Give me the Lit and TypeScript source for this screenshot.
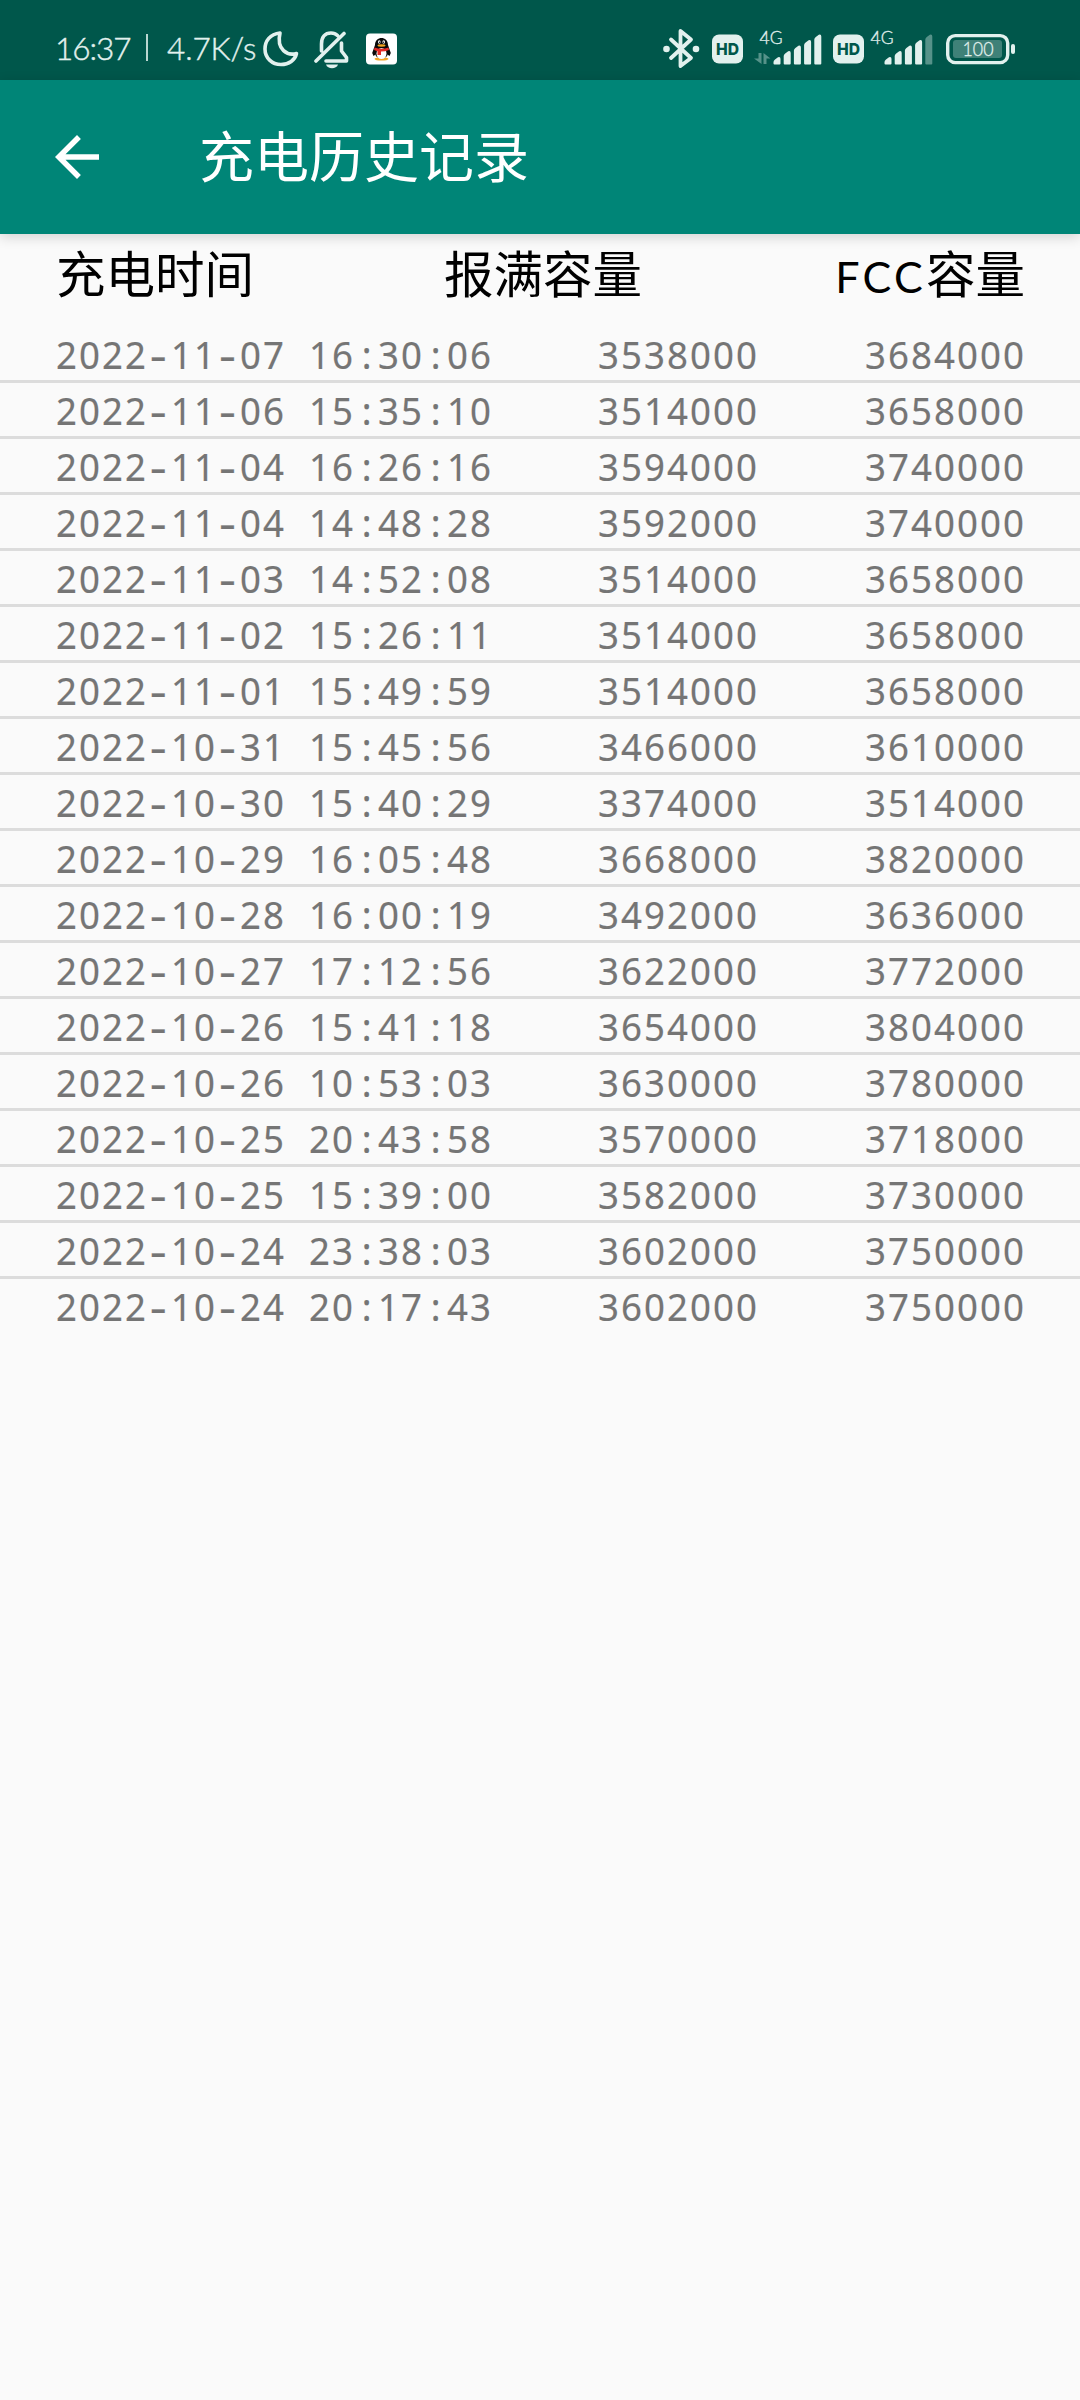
import { LitElement, html, svg, css } from "lit";
import { customElement, property } from "lit/decorators.js";

type Entry = [time: string, full: string, fcc: string];

const HISTORY: Entry[] = [
  ["2022-11-07 16:30:06", "3538000", "3684000"],
  ["2022-11-06 15:35:10", "3514000", "3658000"],
  ["2022-11-04 16:26:16", "3594000", "3740000"],
  ["2022-11-04 14:48:28", "3592000", "3740000"],
  ["2022-11-03 14:52:08", "3514000", "3658000"],
  ["2022-11-02 15:26:11", "3514000", "3658000"],
  ["2022-11-01 15:49:59", "3514000", "3658000"],
  ["2022-10-31 15:45:56", "3466000", "3610000"],
  ["2022-10-30 15:40:29", "3374000", "3514000"],
  ["2022-10-29 16:05:48", "3668000", "3820000"],
  ["2022-10-28 16:00:19", "3492000", "3636000"],
  ["2022-10-27 17:12:56", "3622000", "3772000"],
  ["2022-10-26 15:41:18", "3654000", "3804000"],
  ["2022-10-26 10:53:03", "3630000", "3780000"],
  ["2022-10-25 20:43:58", "3570000", "3718000"],
  ["2022-10-25 15:39:00", "3582000", "3730000"],
  ["2022-10-24 23:38:03", "3602000", "3750000"],
  ["2022-10-24 20:17:43", "3602000", "3750000"],
];

@customElement("status-bar")
class StatusBar extends LitElement {
  static styles = css`
    :host {
      display: flex;
      height: 80px;
      padding: 0 65px 0 55px;
      background: #00574b;
      color: #e2f1ee;
      font-family: Lato, "Liberation Sans", sans-serif;
      font-weight: 300;
      font-size: 31.5px;
      line-height: 96px;
      white-space: nowrap;
      -webkit-text-stroke: 0.4px #e2f1ee;
    }
    svg { display: block; flex: none; fill: #e2f1ee; -webkit-text-stroke: 0; }
    .clock { width: 91px; letter-spacing: -1px; }
    .divider { width: 2px; height: 27px; margin-top: 34px; background: #b9d6d0; }
    .speed { width: 98px; margin-left: 19px; letter-spacing: -0.1px; }
    .moon { margin-left: -2px; }
    .bell { margin-left: 15px; }
    .app { margin-left: 16px; }
    .bluetooth { margin-left: auto; }
    .hd { margin-left: 12px; }
    .signal { margin: 0 -1px 0 11px; }
    .signal2 { margin-left: 6px; }
    .battery { margin-left: 13px; }
    .line { fill: none; stroke: #e2f1ee; }
    .dim { opacity: 0.38; }
    .hd-label { font: 800 16.5px Inter, "Liberation Sans", sans-serif; fill: #00574b; }
    .net-label { font: 300 17px Lato, "Liberation Sans", sans-serif; stroke: #e2f1ee; stroke-width: 0.3px; }
    .level { font: 300 20.5px Lato, "Liberation Sans", sans-serif; stroke: #e2f1ee; stroke-width: 0.3px; }
  `;

  private hd() {
    return html`<svg class="hd" width="31" height="80" viewBox="0 0 31 80">
      <rect x="0" y="34.5" width="31" height="29" rx="7" />
      <text class="hd-label" x="15.5" y="55" text-anchor="middle" textLength="23" lengthAdjust="spacingAndGlyphs">HD</text>
    </svg>`;
  }

  private bars(x: number, lastDim: boolean) {
    const tops = [57, 51, 45.5, 40, 34.5];
    return tops.map((t, i) => {
      const l = x + i * 10.2;
      return svg`<path class=${lastDim && i === 4 ? "dim" : ""}
        d="M${l} ${t + 5}Q${l} ${t + 3.5} ${l + 1.5} ${t + 2.5}L${l + 4.5} ${t + 0.3}Q${l + 7} ${t - 0.5} ${l + 7} ${t + 2}V63.500Q${l + 7} 64.500 ${l + 6} 64.500H${l + 1}Q${l} 64.500 ${l} 63.500Z" />`;
    });
  }

  render() {
    return html`
      <span class="clock">16:37</span>
      <span class="divider"></span>
      <span class="speed">4.7K/s</span>
      <svg class="moon" width="36" height="80" viewBox="0 0 36 80">
        <path class="line" stroke-width="3.6" stroke-linejoin="round"
          d="M17 33C7 34 2 41 2 49C2 58 9 64.500 18 64.500C26 64.500 32 60 33.500 53.500C25 56 13 50 17 33Z" />
      </svg>
      <svg class="bell" width="36" height="80" viewBox="0 0 36 80">
        <g class="line" stroke-width="3.6" stroke-linecap="round" stroke-linejoin="round">
          <path d="M2 61L30 33.500M7.500 51V44C7.500 37 11 33 17 33C20 33 22 34 23.500 35.500M27.500 43V51L32.500 57.500V61H12" />
        </g>
        <path d="M12 64.500H24C22.500 69.500 13.500 69.500 12 64.500Z" />
      </svg>
      <svg class="app" width="31" height="80" viewBox="0 0 31 80">
        <rect x="0" y="33.500" width="31" height="31" rx="4" fill="#fff" />
        <ellipse cx="15.500" cy="59" rx="7" ry="1.600" fill="#f2a628" />
        <path d="M9 45C9 35.500 22 35.500 22 45L24.800 53L23.500 56L21.500 54.500C21 59.500 10 59.500 9.500 54.500L7.500 56L6.200 53Z" fill="#090909" />
        <ellipse cx="15.500" cy="53.500" rx="5" ry="5.500" fill="#fff" />
        <ellipse cx="13.300" cy="42" rx="1.300" ry="1.800" fill="#fff" />
        <ellipse cx="17.700" cy="42" rx="1.300" ry="1.800" fill="#fff" />
        <circle cx="13.600" cy="42.200" r=".7" fill="#111" /><circle cx="17.400" cy="42.200" r=".7" fill="#111" />
        <ellipse cx="15.500" cy="45.500" rx="4" ry="1.200" fill="#f4a51e" />
        <path d="M8.500 47.500Q15.500 50 22.500 47.500L23 50Q19 51.500 15 51.500V55H11.500V51.300L8 50Z" fill="#e42b27" />
      </svg>
      <svg class="bluetooth" width="37" height="80" viewBox="0 0 37 80">
        <path class="line" stroke-width="3.800" stroke-linejoin="round" stroke-linecap="round"
          d="M8 39.500L28 58L17.500 66V31L28 39.500L8 58" />
        <circle cx="3.500" cy="49" r="3.300" /><circle cx="33" cy="49" r="3.300" />
      </svg>
      ${this.hd()}
      <svg class="signal" width="68" height="80" viewBox="755 0 68 80">
        <text class="net-label" x="760.500" y="44" textLength="23" lengthAdjust="spacingAndGlyphs">4G</text>
        <path class="dim" d="M759.500 53H762.500V64L755 58.500H759.500ZM764.500 64V53L771.500 58.500H767.500V64Z" />
        ${this.bars(774.5, false)}
      </svg>
      ${this.hd()}
      <svg class="signal2" width="63" height="80" viewBox="870 0 63 80">
        <text class="net-label" x="870.500" y="44" textLength="23" lengthAdjust="spacingAndGlyphs">4G</text>
        ${this.bars(884.5, true)}
      </svg>
      <svg class="battery" width="69" height="80" viewBox="946 0 69 80">
        <rect class="line" x="947.700" y="35.600" width="60" height="27" rx="7.500" stroke-width="3.400" />
        <rect x="953" y="40" width="49" height="18" rx="3" opacity=".28" />
        <rect x="1011" y="44" width="4" height="10" rx="2" />
        <text class="level" x="978" y="56.300" text-anchor="middle" textLength="31" lengthAdjust="spacingAndGlyphs">100</text>
      </svg>
    `;
  }
}

@customElement("app-bar")
class AppBar extends LitElement {
  @property() heading = "";
  static styles = css`
    :host {
      display: flex;
      align-items: center;
      height: 154px;
      padding-left: 44px;
      background: #008577;
      box-shadow: 0 3px 12px rgba(0, 0, 0, 0.16);
      color: #fff;
      position: relative;
    }
    svg { width: 66px; height: 66px; fill: #fff; }
    .title {
      margin: 0 0 9px 89px;
      font: 400 55px/80px "Noto Sans CJK SC", sans-serif;
    }
  `;
  render() {
    return html`
      <svg viewBox="0 0 24 24"><path d="M20 11H7.830l5.590-5.590L12 4l-8 8 8 8 1.410-1.410L7.830 13H20v-2z" /></svg>
      <h1 class="title">${this.heading}</h1>
    `;
  }
}

@customElement("app-root")
class AppRoot extends LitElement {
  static styles = css`
    :host {
      display: flex;
      flex-direction: column;
      height: 2400px;
      background: #fafafa;
      overflow: hidden;
    }
    .head {
      display: flex;
      justify-content: space-between;
      height: 93px;
      padding: 0 55px 0 56px;
      color: #000;
      font: 400 49.5px/75px "Noto Sans CJK SC", sans-serif;
    }
    .head span { white-space: nowrap; }
    .head .first { width: 200px; }
    .head .mid { padding-left: 5px; }
    .head .last { width: 200px; text-align: right; }
    .head .latin { font-family: Lato, sans-serif; font-weight: 400; font-size: 43px; letter-spacing: 3.3px; }
    .row {
      display: grid;
      grid-template-columns: 1fr 162px 267px;
      height: 53px;
      padding: 0 54px 0 56px;
      border-bottom: 3px solid #dcdcdc;
      color: #757575;
      font: 400 38.5px/55px "Noto Sans", sans-serif;
      letter-spacing: 2.19px;
      white-space: nowrap;
      -webkit-text-stroke: 0.2px #757575;
    }
    .row:last-child { border-bottom: 0; }
    .time, .value { display: flex; transform: scaleX(0.95); }
    .time { transform-origin: left; }
    .value { justify-content: flex-end; transform-origin: right; }
    .mark { width: 24.21px; text-align: center; letter-spacing: 0; }
    .dash { transform: translateX(-1.5px) scaleX(1.4); font-weight: 500; }
  `;

  private time(value: string) {
    return value.split(/([-: ])/).map((part) =>
      /\d/.test(part)
        ? html`<span>${part}</span>`
        : html`<span class="mark ${part === "-" ? "dash" : ""}">${part}</span>`
    );
  }

  render() {
    return html`
      <status-bar></status-bar>
      <app-bar heading="充电历史记录"></app-bar>
      <div class="head">
        <span class="first">充电时间</span>
        <span class="mid">报满容量</span>
        <span class="last"><span class="latin">FCC</span>容量</span>
      </div>
      <div class="list">
        ${HISTORY.map(
          ([time, full, fcc]) => html`<div class="row">
            <div class="time">${this.time(time)}</div>
            <div class="value">${full}</div>
            <div class="value">${fcc}</div>
          </div>`
        )}
      </div>
    `;
  }
}
